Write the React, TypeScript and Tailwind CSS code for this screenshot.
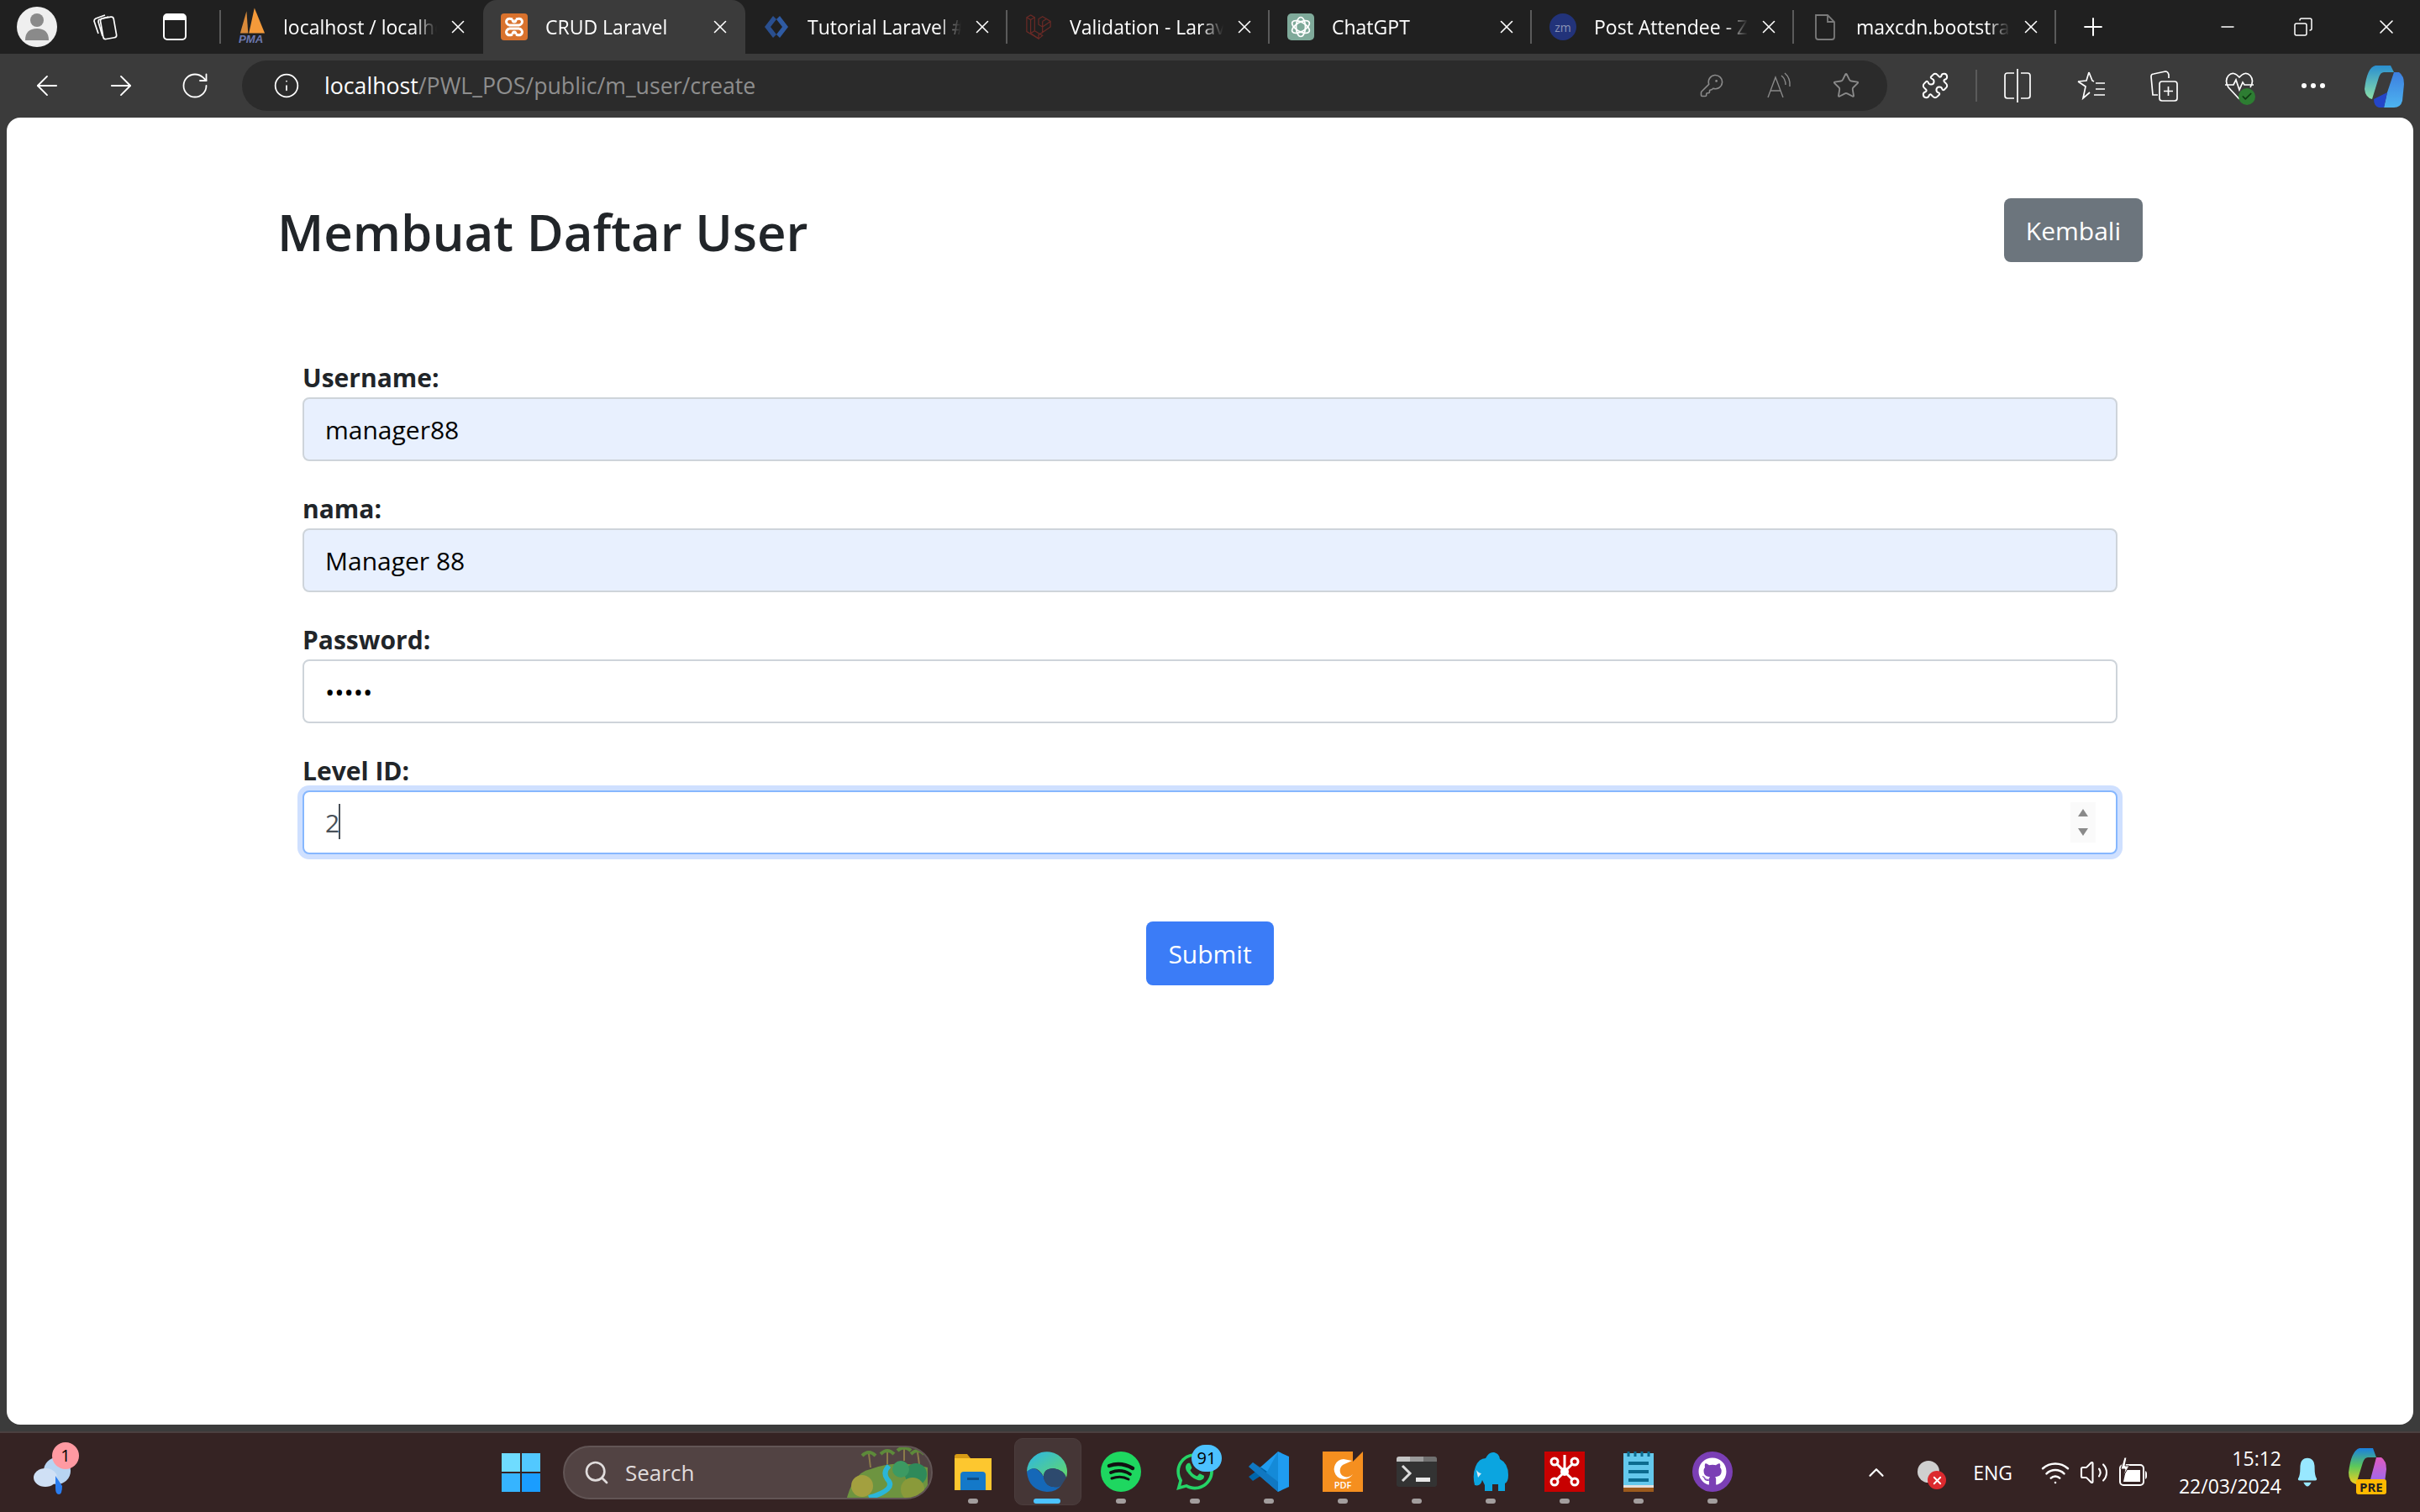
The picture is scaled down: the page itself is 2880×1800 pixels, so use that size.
import {
  ArrowLeft,
  ArrowRight,
  Check,
  ChevronUp,
  Copy,
  Info,
  KeyRound,
  Minus,
  Plus,
  Puzzle,
  RotateCw,
  Search,
  Star,
  Volume2,
  Wifi,
  X,
} from "lucide-react";
import { FaGithub, FaWhatsapp } from "react-icons/fa";
import type { ReactNode } from "react";

function PmaIcon() {
  return (
    <svg width="34" height="48" viewBox="0 0 34 48">
      <path d="M2 32 L10 4 L12 32 Z" fill="#d98a3a" />
      <path d="M13 32 L20 0 L33 32 Z" fill="#f49a3a" />
      <text x="0" y="44" fontSize="14" fontWeight="700" fontStyle="italic" fill="#6c78af" fontFamily="Liberation Sans, sans-serif">PMA</text>
    </svg>
  );
}

function XamppIcon() {
  return (
    <svg width="32" height="32" viewBox="0 0 32 32">
      <rect width="32" height="32" rx="4" fill="#d9722d" />
      <path d="M14 7 C6 4 4 12 10 14 M14 25 C6 28 4 20 10 18 M10 14 H22 M10 18 H22 M18 7 C26 4 28 12 22 14 M18 25 C26 28 28 20 22 18 M14 7 C14 11 18 11 18 7 M14 25 C14 21 18 21 18 25" fill="none" stroke="#fff" strokeWidth="3" />
    </svg>
  );
}

function TutorialIcon() {
  return (
    <svg width="32" height="32" viewBox="0 0 32 32">
      <path d="M12 3 L2 16 L12 29 L16 25 L9 16 L16 7 Z" fill="#2a4f8f" />
      <path d="M20 3 L30 16 L20 29 L16 25 L23 16 L16 7 Z" fill="#2f5ba3" />
    </svg>
  );
}

function LaravelIcon() {
  return (
    <svg width="34" height="34" viewBox="0 0 34 34" fill="none" stroke="#6a2a26" strokeWidth="1.3">
      <path d="M2 5 L7 2 L12 5 V22 L22 28 L17 32 L2 23 Z" />
      <path d="M12 22 L7 25 M2 5 L7 8 L12 5 M7 8 V25 L17 32 V27 L22 24" />
      <path d="M22 10 L27 7 L32 10 V17 L22 24 V17 L17 14 V7 L22 4 L27 7 M22 17 L32 10 M22 10 V17" />
    </svg>
  );
}

function ChatGptIcon() {
  return (
    <svg width="32" height="32" viewBox="0 0 32 32">
      <rect width="32" height="32" rx="5" fill="#7faa9a" />
      <g fill="none" stroke="#fff" strokeWidth="1.7">
        <ellipse cx="16" cy="16" rx="5.5" ry="11.5" />
        <ellipse cx="16" cy="16" rx="5.5" ry="11.5" transform="rotate(60 16 16)" />
        <ellipse cx="16" cy="16" rx="5.5" ry="11.5" transform="rotate(120 16 16)" />
      </g>
    </svg>
  );
}

function ZoomIcon() {
  return (
    <div className="flex h-[32px] w-[32px] items-center justify-center rounded-full bg-[#22337a] text-[14px] font-medium text-[#8b93b5]">
      zm
    </div>
  );
}

function DocIcon() {
  return (
    <svg width="32" height="34" viewBox="0 0 32 34" fill="none" stroke="#7a7a7a" strokeWidth="1.8">
      <path d="M5 3 H19 L27 11 V29 Q27 32 24 32 H8 Q5 32 5 29 Z" />
      <path d="M19 3 V11 H27" />
    </svg>
  );
}

const tabs: { title: string; icon: ReactNode; active?: boolean }[] = [
  { title: "localhost / localhost / phpMyAdmin", icon: <PmaIcon /> },
  { title: "CRUD Laravel", icon: <XamppIcon />, active: true },
  { title: "Tutorial Laravel #10 Validation", icon: <TutorialIcon /> },
  { title: "Validation - Laravel 10.x", icon: <LaravelIcon /> },
  { title: "ChatGPT", icon: <ChatGptIcon /> },
  { title: "Post Attendee - Zoom", icon: <ZoomIcon /> },
  { title: "maxcdn.bootstrapcdn.com", icon: <DocIcon /> },
];

function Tab({ title, icon, active, hideLine }: { title: string; icon: ReactNode; active?: boolean; hideLine?: boolean }) {
  return (
    <div
      className={`flex h-[64px] w-[312px] items-center pl-[21px] ${active ? "rounded-t-[16px] bg-[#3b3b3b]" : ""}`}
    >
      <div className="flex w-[32px] justify-center">{icon}</div>
      <div className="ml-[21px] w-[183px] overflow-hidden whitespace-nowrap text-[23px] leading-[32px] text-white [mask-image:linear-gradient(to_right,black_85%,transparent)]">
        {title}
      </div>
      <X size={26} strokeWidth={1.5} className="ml-[12px] text-white" />
      {!hideLine && !active && <div className="ml-auto h-[40px] w-[2px] bg-[#5a5a5a]" />}
    </div>
  );
}

function TitleBar() {
  return (
    <div className="flex h-[64px] items-center bg-[#202020]">
      <div className="ml-[20px] flex h-[48px] w-[48px] items-center justify-center overflow-hidden rounded-full bg-[#efefef]">
        <svg width="30" height="36" viewBox="0 0 30 36">
          <circle cx="15" cy="10" r="8" fill="#8a8a8a" />
          <path d="M1 34 Q1 20 15 20 Q29 20 29 34 Z" fill="#8a8a8a" />
        </svg>
      </div>
      <div className="ml-[38px] flex w-[36px] justify-center">
        <svg width="32" height="34" viewBox="0 0 32 34" fill="none" stroke="#fff" strokeWidth="1.7">
          <rect x="13" y="6" width="16" height="25" rx="3" transform="rotate(-10 20 18)" />
          <path d="M9 25 L4 10 Q4 8 6 7 L17 3 M14 28 L9 11 Q9 8 11 8 L21 5" />
        </svg>
      </div>
      <div className="ml-[48px] flex w-[36px] justify-center">
        <div className="h-[32px] w-[28px] rounded-[5px] border-[2px] border-white">
          <div className="h-[6px] bg-white" />
        </div>
      </div>
      <div className="ml-[35px] h-[40px] w-[2px] bg-[#5a5a5a]" />
      {tabs.map((tab, i) => (
        <Tab key={tab.title} {...tab} hideLine={i === 0} />
      ))}
      <Plus size={34} strokeWidth={1.4} className="ml-[27px] text-white" />
      <div className="ml-auto flex items-center pr-[26px]">
        <Minus size={24} strokeWidth={1.5} className="text-white" />
        <Copy size={24} strokeWidth={1.5} className="ml-[66px] -scale-x-100 text-white" />
        <X size={28} strokeWidth={1.4} className="ml-[73px] text-white" />
      </div>
    </div>
  );
}

function ToolCell({ children }: { children: ReactNode }) {
  return <div className="flex h-[76px] w-[88px] items-center justify-center text-white">{children}</div>;
}

function CopilotIcon() {
  return (
    <svg width="48" height="52" viewBox="0 0 48 52">
      <defs>
        <linearGradient id="cpA" x1="0" y1="0" x2="0" y2="1">
          <stop offset="0" stopColor="#2a8fd0" />
          <stop offset="1" stopColor="#8ce0a8" />
        </linearGradient>
        <linearGradient id="cpB" x1="0" y1="0" x2="0" y2="1">
          <stop offset="0" stopColor="#3d7fe0" />
          <stop offset="1" stopColor="#4db4f0" />
        </linearGradient>
      </defs>
      <path d="M14 2 H32 L36 10 H24 Q20 10 18 16 L10 42 Q2 40 1 30 Q4 4 14 2 Z" fill="url(#cpA)" />
      <path d="M36 10 H42 Q48 14 48 24 L46 44 Q44 52 36 52 H24 L28 34 L36 10 Z" fill="url(#cpB)" />
      <path d="M12 42 L24 36 L28 34 L24 52 H18 Q12 50 12 42 Z" fill="#2446c8" />
    </svg>
  );
}

function ToolBar() {
  return (
    <div className="flex h-[76px] items-center bg-[#3b3b3b] pl-[12px]">
      <ToolCell>
        <ArrowLeft size={38} strokeWidth={1.2} />
      </ToolCell>
      <ToolCell>
        <ArrowRight size={38} strokeWidth={1.2} />
      </ToolCell>
      <ToolCell>
        <RotateCw size={36} strokeWidth={1.2} />
      </ToolCell>
      <div className="ml-[12px] flex h-[60px] w-[1958px] items-center rounded-[30px] bg-[#2b2b2b] pl-[37px] pr-[9px]">
        <Info size={32} strokeWidth={1.3} className="text-white" />
        <div className="ml-[29px] text-[26.7px] leading-[36px] text-[#8e8e8e]">
          <span className="text-white">localhost</span>/PWL_POS/public/m_user/create
        </div>
        <div className="ml-auto flex items-center text-[#8a8a8a]">
          <div className="flex w-[80px] justify-center">
            <KeyRound size={30} strokeWidth={1.3} />
          </div>
          <div className="flex w-[80px] justify-center">
            <svg width="32" height="32" viewBox="0 0 32 32" fill="none" stroke="currentColor" strokeWidth="1.4">
              <path d="M3 30 L12 6 L21 30 M6.5 22 H18" />
              <path d="M19 4 Q24 8 24 15 M23 1 Q30 7 29 17" />
            </svg>
          </div>
          <div className="flex w-[80px] justify-center">
            <Star size={34} strokeWidth={1.3} />
          </div>
        </div>
      </div>
      <div className="ml-[13px] flex items-center">
        <ToolCell>
          <Puzzle size={34} strokeWidth={1.4} />
        </ToolCell>
        <div className="ml-[4px] mr-[4px] h-[38px] w-[2px] bg-[#5a5a5a]" />
        <ToolCell>
          <svg width="32" height="42" viewBox="0 0 32 42" fill="none" stroke="#fff" strokeWidth="1.7">
            <path d="M12 6 H4 Q1 6 1 9 V33 Q1 36 4 36 H12 M20 6 H28 Q31 6 31 9 V33 Q31 36 28 36 H20 M16 1 V41" />
          </svg>
        </ToolCell>
        <ToolCell>
          <svg width="36" height="36" viewBox="0 0 36 36" fill="none" stroke="#fff" strokeWidth="1.7">
            <path d="M15 2 L19 12 L21 13 M2 13 L11 19 L8 33 L16 26 M2 13 L12 12 L15 2" />
            <path d="M23 15 H34 M23 22 H34 M21 29 H34" />
          </svg>
        </ToolCell>
        <ToolCell>
          <svg width="36" height="38" viewBox="0 0 36 38" fill="none" stroke="#fff" strokeWidth="1.7">
            <path d="M9 30 L3 30 L1 8 Q1 5 4 5 L18 2 Q21 2 22 6 L22 10" />
            <rect x="11" y="14" width="21" height="23" rx="3" />
            <path d="M21.5 20 V31 M16 25.5 H27" />
          </svg>
        </ToolCell>
        <ToolCell>
          <div className="relative">
            <svg width="36" height="36" viewBox="0 0 36 36" fill="none" stroke="#fff" strokeWidth="1.7">
              <path d="M18 34 L5 20 Q0 12 5 6 Q11 0 18 8 Q25 0 31 6 Q36 12 31 20" />
              <path d="M1 17 H11 L14 11 L18 23 L22 14 L24 17 H35" />
            </svg>
            <div className="absolute bottom-[-5px] right-[-1px] flex h-[20px] w-[20px] items-center justify-center rounded-full bg-[#2d7d32] text-[#0f3a12]">
              <Check size={14} strokeWidth={3} />
            </div>
          </div>
        </ToolCell>
        <ToolCell>
          <div className="flex gap-[5px]">
            <div className="h-[6px] w-[6px] rounded-full bg-white" />
            <div className="h-[6px] w-[6px] rounded-full bg-white" />
            <div className="h-[6px] w-[6px] rounded-full bg-white" />
          </div>
        </ToolCell>
        <div className="flex h-[76px] w-[80px] items-center justify-center">
          <CopilotIcon />
        </div>
      </div>
    </div>
  );
}

function Field({ label, type, value, filled }: { label: string; type: string; value: string; filled?: boolean }) {
  return (
    <div className="mb-[32px]">
      <label className="block pt-[2px] text-[30px] font-bold leading-[46px] text-[#212529]">{label}</label>
      <input
        readOnly
        type={type}
        value={value}
        className={`block h-[76px] w-full rounded-[8px] border-[2px] border-[#ced4da] px-[25px] text-[30px] text-black outline-none ${filled ? "bg-[#e8f0fe]" : "bg-white"}`}
      />
    </div>
  );
}

function UserForm() {
  return (
    <main className="mx-[8px] h-[1556px] overflow-hidden rounded-[16px] bg-white">
      <div className="mx-auto w-[2220px]">
        <div className="flex items-start justify-between pt-[96px]">
          <h2 className="mt-[2px] text-[60px] font-semibold leading-[76px] text-[#212529]">Membuat Daftar User</h2>
          <a className="flex h-[76px] items-center rounded-[8px] bg-[#6c757d] px-[26px] text-[30px] text-white">Kembali</a>
        </div>
        <form className="mt-[111px] px-[30px]">
          <Field label="Username:" type="text" value="manager88" filled />
          <Field label="nama:" type="text" value="Manager 88" filled />
          <Field label="Password:" type="password" value="12345" />
          <div>
            <label className="block pt-[2px] text-[30px] font-bold leading-[46px] text-[#212529]">Level ID:</label>
            <div className="relative">
              <input
                readOnly
                type="text"
                value="2"
                className="block h-[76px] w-full rounded-[8px] border-[2px] border-[#86b7fe] bg-white px-[25px] text-[30px] text-[#495057] shadow-[0_0_0_6px_#cfe0ff] outline-none"
              />
              <div className="absolute left-[43px] top-[16px] h-[42px] w-[2px] bg-[#495057]" />
              <div className="absolute right-[26px] top-[14px] flex h-[48px] w-[30px] flex-col items-center justify-center gap-[14px] bg-[#fafafa]">
                <div className="h-0 w-0 border-x-[6px] border-b-[9px] border-x-transparent border-b-[#8a8a8a]" />
                <div className="h-0 w-0 border-x-[6px] border-t-[9px] border-x-transparent border-t-[#8a8a8a]" />
              </div>
            </div>
          </div>
          <div className="mt-[80px] flex justify-center">
            <button type="button" className="flex h-[76px] items-center rounded-[8px] bg-[#3b7cf7] px-[26px] text-[30px] text-white">
              Submit
            </button>
          </div>
        </form>
      </div>
    </main>
  );
}

function AppSlot({ children, active }: { children: ReactNode; active?: boolean }) {
  return (
    <div className="relative flex h-[96px] w-[88px] items-center justify-center">
      {active && (
        <div className="absolute left-[5px] top-[7px] h-[80px] w-[80px] rounded-[10px] border border-[#4b3d3d] bg-[#453636]" />
      )}
      <div className="relative mt-[-2px] flex h-[48px] w-[48px] items-center justify-center">{children}</div>
      <div
        className={`absolute top-[79px] h-[6px] rounded-full ${active ? "w-[32px] bg-[#4cc2ff]" : "w-[12px] bg-[#a39e9e]"}`}
      />
    </div>
  );
}

function EdgeIcon() {
  return (
    <svg width="48" height="48" viewBox="0 0 48 48">
      <defs>
        <linearGradient id="edA" x1="0" y1="0" x2="1" y2="1">
          <stop offset="0" stopColor="#2bb5e8" />
          <stop offset="1" stopColor="#63d86a" />
        </linearGradient>
      </defs>
      <path d="M0 24 A24 24 0 1 1 47 31 Q44 22 32 20 Q20 20 20 30 Q12 14 0 24 Z" fill="url(#edA)" />
      <path d="M0 24 Q10 14 20 30 Q22 44 38 42 L42 39 Q36 48 24 48 Q2 46 0 24 Z" fill="#1568b8" />
      <path d="M20 30 Q20 20 32 20 Q44 22 47 31 L42 39 L38 42 Q22 44 20 30 Z" fill="#2d4a6e" />
    </svg>
  );
}

function VsCodeIcon() {
  return (
    <svg width="48" height="48" viewBox="0 0 48 48">
      <path d="M35 0 L48 6 V42 L35 48 L8 24 Z" fill="#1f9cf0" />
      <path d="M35 0 V48 L0 18 L5 13 L22 24 Z" fill="#0b7bc5" opacity="0.55" />
      <path d="M0 30 L5 35 L22 24 L15 19 Z" fill="#0065a9" />
      <path d="M0 18 L5 13 L35 36 V48 Z" fill="#1078c2" />
    </svg>
  );
}

function TaskBar() {
  return (
    <div className="flex h-[96px] items-center border-t-[2px] border-[#4a3f3f] bg-[#352323]">
      <div className="relative ml-[40px] h-[56px] w-[50px]">
        <svg width="50" height="56" viewBox="0 0 50 56" className="mt-[4px]">
          <ellipse cx="28" cy="22" rx="16" ry="16" fill="#b7d4f2" />
          <ellipse cx="14" cy="30" rx="14" ry="11" fill="#cfe0f5" />
          <path d="M26 28 L34 40 Q34 50 30 50 Q26 50 26 42 Z" fill="#2a7df0" />
        </svg>
        <div className="absolute left-[22px] top-[-8px] flex h-[32px] w-[32px] items-center justify-center rounded-full bg-[#ff9aa2] text-[20px] text-black">
          1
        </div>
      </div>
      <div className="ml-[507px] grid h-[46px] w-[46px] grid-cols-2 gap-[2px]">
        <div className="bg-[#6fdcff]" />
        <div className="bg-[#52c8ff]" />
        <div className="bg-[#36b4ff]" />
        <div className="bg-[#1a9dff]" />
      </div>
      <div className="relative ml-[27px] flex h-[64px] w-[440px] items-center overflow-hidden rounded-[32px] border-[2px] border-[#625555] bg-[#524343] pl-[22px] text-[#e0dcdc]">
        <Search size={32} strokeWidth={2} className="shrink-0" />
        <span className="ml-[18px] text-[26px]">Search</span>
        <svg width="100" height="60" viewBox="0 0 100 60" className="absolute right-[2px] top-[0px]">
          <path d="M2 60 Q10 30 30 26 Q60 14 98 24 V50 L90 60 Z" fill="#6d9440" />
          <path d="M30 24 L28 8 M50 20 L50 6 M70 16 L70 2 M88 20 L86 6" stroke="#8b7b4a" strokeWidth="2" />
          <path d="M20 10 Q28 2 36 10 M42 8 Q50 0 58 8 M62 4 Q70 -3 78 4 M78 8 Q86 0 94 8" stroke="#5d8a3a" strokeWidth="4" fill="none" />
          <circle cx="84" cy="32" r="13" fill="#2f8a5a" />
          <circle cx="66" cy="26" r="10" fill="#3c9a62" />
          <circle cx="20" cy="46" r="13" fill="#a3a03f" />
          <circle cx="80" cy="50" r="14" fill="#8a9a3a" />
          <path d="M28 60 Q62 50 50 38 Q44 30 52 22" stroke="#2bb6d8" strokeWidth="6" fill="none" />
        </svg>
      </div>
      <div className="ml-[4px] flex items-center">
        <AppSlot>
          <svg width="46" height="44" viewBox="0 0 46 44">
            <path d="M1 4 Q1 1 4 1 H16 L20 6 H1 Z" fill="#d79b15" />
            <path d="M1 6 H45 V44 H1 Z" fill="#fdc72f" />
            <path d="M8 26 Q8 22 12 22 H34 Q38 22 38 26 V44 H8 Z" fill="#1479c9" />
            <rect x="16" y="29" width="14" height="3" fill="#0c4f8a" />
          </svg>
        </AppSlot>
        <AppSlot active>
          <EdgeIcon />
        </AppSlot>
        <AppSlot>
          <svg width="48" height="48" viewBox="0 0 48 48" fill="none" stroke="#111" strokeLinecap="round">
            <circle cx="24" cy="24" r="24" fill="#1ed760" stroke="none" />
            <path d="M10 17 Q24 12 38 20" strokeWidth="4.5" />
            <path d="M12 25 Q24 20 35 27" strokeWidth="3.8" />
            <path d="M13 32 Q24 28 33 33" strokeWidth="3" />
          </svg>
        </AppSlot>
        <AppSlot>
          <FaWhatsapp size={50} color="#25d366" />
          <div className="absolute left-[20px] top-[-8px] flex h-[32px] w-[36px] items-center justify-center rounded-full bg-[#4cc2ff] text-[20px] text-black">
            91
          </div>
        </AppSlot>
        <AppSlot>
          <VsCodeIcon />
        </AppSlot>
        <AppSlot>
          <div className="relative h-[48px] w-[48px] bg-[#f58f1f]">
            <div className="absolute right-0 top-0 h-0 w-0 border-b-[12px] border-l-[12px] border-b-transparent border-l-[#352323]" />
            <svg width="30" height="30" viewBox="0 0 30 30" className="absolute left-[10px] top-[7px]">
              <path d="M15 2 A12 12 0 1 0 26 20 A9 9 0 0 1 14 22 A8 8 0 0 1 16 8 L25 4 Z" fill="#fff" />
            </svg>
            <div className="absolute inset-x-0 bottom-[1px] text-center text-[11px] font-semibold leading-[14px] text-white">PDF</div>
          </div>
        </AppSlot>
        <AppSlot>
          <div className="h-[36px] w-[48px] overflow-hidden rounded-[3px] bg-[#333]">
            <div className="flex h-[6px]">
              <div className="w-[16px] bg-[#c4c4c4]" />
              <div className="w-[16px] bg-[#9a9a9a]" />
              <div className="w-[16px] bg-[#707070]" />
            </div>
            <svg width="48" height="30" viewBox="0 0 48 30" fill="none">
              <path d="M7 5 L16 14 L7 23" stroke="#dcdcdc" strokeWidth="3" />
              <rect x="23" y="19" width="17" height="5" fill="#e8e8e8" />
            </svg>
          </div>
        </AppSlot>
        <AppSlot>
          <svg width="44" height="48" viewBox="0 0 44 48">
            <path d="M3 40 Q0 28 4 18 Q8 8 16 8 Q20 0 26 1 Q32 2 33 9 Q43 14 43 28 Q43 36 39 38 V47 H31 V39 H24 V47 H15 V40 L12 34 Q10 42 3 40 Z" fill="#0ba5e0" />
            <path d="M5 22 Q8 26 11 26 L7 31 Z" fill="#d8ecf5" />
          </svg>
        </AppSlot>
        <AppSlot>
          <svg width="48" height="48" viewBox="0 0 48 48">
            <rect width="48" height="48" fill="#c80000" />
            <g fill="none" stroke="#fff" strokeWidth="3">
              <circle cx="12" cy="12" r="4" />
              <circle cx="36" cy="12" r="4" />
              <circle cx="12" cy="36" r="4" />
              <circle cx="36" cy="36" r="4" />
              <path d="M15 15 L24 24 L33 15 M15 33 L24 24 L33 33 M24 4 V20" />
            </g>
            <circle cx="24" cy="24" r="5" fill="#fff" />
          </svg>
        </AppSlot>
        <AppSlot>
          <svg width="36" height="48" viewBox="0 0 36 48">
            <rect y="2" width="36" height="40" fill="#64c8ec" />
            <rect y="40" width="36" height="3" fill="#e4dfdc" />
            <rect y="43" width="36" height="5" fill="#9c5a1c" />
            <path d="M6 0 V6 M14 0 V6 M22 0 V6 M30 0 V6" stroke="#0b6b8f" strokeWidth="3" />
            <path d="M6 14 H30 M6 24 H30 M6 34 H30" stroke="#0b6b8f" strokeWidth="4" />
          </svg>
        </AppSlot>
        <AppSlot>
          <div className="flex h-[48px] w-[48px] items-center justify-center rounded-full bg-[#7b3fb5] text-white">
            <FaGithub size={34} />
          </div>
        </AppSlot>
      </div>
      <div className="ml-auto flex items-center pr-[34px] text-white">
        <ChevronUp size={30} strokeWidth={1.8} />
        <div className="relative ml-[34px] h-[32px] w-[32px]">
          <div className="absolute left-[0px] top-[2px] h-[26px] w-[26px] rounded-full bg-[#cfcfcf]" />
          <div className="absolute right-[-2px] bottom-[-4px] flex h-[22px] w-[22px] items-center justify-center rounded-full bg-[#dc2a2f]">
            <X size={15} strokeWidth={3} />
          </div>
        </div>
        <span className="ml-[34px] text-[23px]">ENG</span>
        <Wifi size={36} strokeWidth={1.7} className="ml-[33px]" />
        <Volume2 size={36} strokeWidth={1.4} className="ml-[10px]" />
        <svg width="34" height="36" viewBox="0 0 34 36" fill="none" className="ml-[12px]">
          <rect x="1" y="9" width="28" height="24" rx="4" stroke="#fff" strokeWidth="2" />
          <path d="M31 16 Q33 17 33 19 V23 Q33 25 31 26 Z" fill="#fff" />
          <path d="M8 15 H25 V29 H5 Z" fill="#fff" />
          <path d="M6 0 L2 14 H7 L5 22 L12 10 H7 L9 0 Z" fill="#fff" stroke="#352323" strokeWidth="1" />
        </svg>
        <div className="ml-[27px] w-[132px] text-right text-[23px] leading-[33px]">
          <div>15:12</div>
          <div>22/03/2024</div>
        </div>
        <svg width="28" height="36" viewBox="0 0 30 46" className="ml-[17px]" fill="#98e8ff">
          <path d="M15 1 Q26 1 26 16 Q26 28 29 32 Q30 35 27 35 H3 Q0 35 1 32 Q4 28 4 16 Q4 1 15 1 Z" />
          <path d="M9 38 H21 Q18 44 15 44 Q12 44 9 38 Z" />
        </svg>
        <div className="relative ml-[34px] h-[60px] w-[52px]">
          <svg width="46" height="52" viewBox="0 0 46 52">
            <defs>
              <linearGradient id="cpC" x1="0" y1="0" x2="0" y2="1">
                <stop offset="0" stopColor="#1a7fe0" />
                <stop offset="0.5" stopColor="#5cc85a" />
                <stop offset="1" stopColor="#f5d020" />
              </linearGradient>
              <linearGradient id="cpD" x1="0" y1="0" x2="0" y2="1">
                <stop offset="0" stopColor="#e05ac0" />
                <stop offset="1" stopColor="#9a6af0" />
              </linearGradient>
            </defs>
            <path d="M14 1 H30 L34 12 H24 Q20 12 18 18 L10 44 Q1 42 1 30 Q4 4 14 1 Z" fill="url(#cpC)" />
            <path d="M34 12 H40 Q46 16 46 26 L44 42 H26 L34 12 Z" fill="url(#cpD)" />
          </svg>
          <div className="absolute left-[10px] top-[38px] rounded-[3px] bg-[#ffb900] px-[4px] text-[15px] font-bold leading-[18px] text-[#222]">PRE</div>
        </div>
      </div>
    </div>
  );
}

export default function App() {
  return (
    <div className="flex h-[1800px] w-[2880px] flex-col overflow-hidden bg-[#3b3b3b] font-['Open_Sans',sans-serif]">
      <TitleBar />
      <ToolBar />
      <UserForm />
      <div className="h-[8px] shrink-0" />
      <TaskBar />
    </div>
  );
}
